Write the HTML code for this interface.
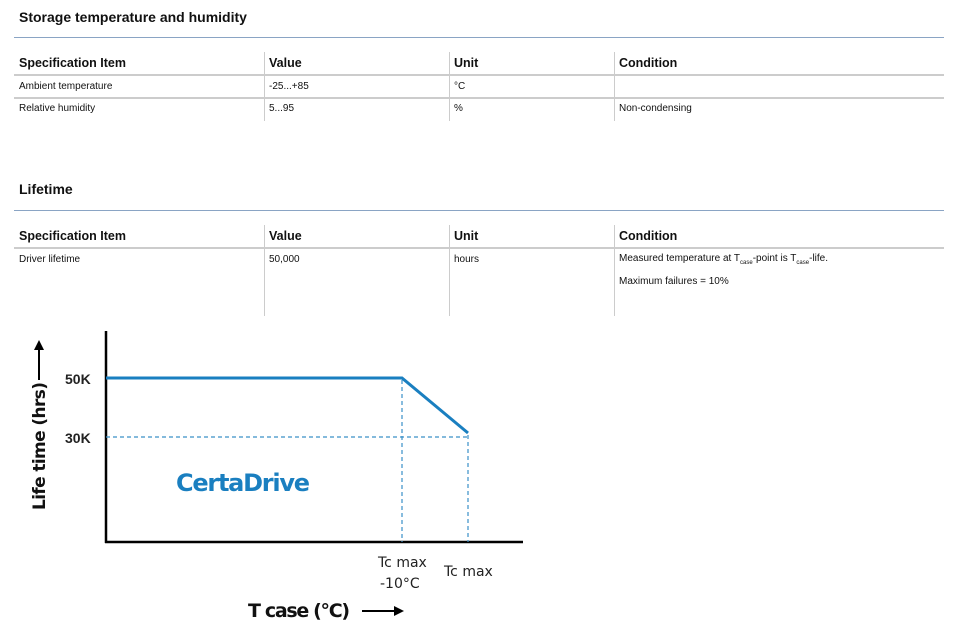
<!DOCTYPE html>
<html><head><meta charset="utf-8"><style>
body{margin:0;width:960px;height:641px;background:#fff;font-family:"Liberation Sans",sans-serif;color:#111;position:relative;overflow:hidden}
.a{position:absolute;white-space:nowrap}
.t{font-size:14px;font-weight:bold}
.h{font-size:12.5px;font-weight:bold}
.c{font-size:10px}
.hl{position:absolute;height:1px;background:#ccc}
.vl{position:absolute;width:1px;background:#ccc}
</style></head><body>
<div class="a t" style="left:19px;top:9px">Storage temperature and humidity</div>
<div class="hl" style="left:14px;top:37px;width:930px;background:#8aa4c4"></div>
<div class="a h" style="left:19px;top:56px">Specification Item</div>
<div class="a h" style="left:269px;top:56px">Value</div>
<div class="a h" style="left:454px;top:56px">Unit</div>
<div class="a h" style="left:619px;top:56px">Condition</div>
<div class="hl" style="left:14px;top:74px;width:930px;height:2px"></div>
<div class="hl" style="left:14px;top:97px;width:930px;height:2px"></div>
<div class="vl" style="left:264px;top:52px;height:69px"></div>
<div class="vl" style="left:449px;top:52px;height:69px"></div>
<div class="vl" style="left:614px;top:52px;height:69px"></div>
<div class="a c" style="left:19px;top:81px">Ambient temperature</div>
<div class="a c" style="left:269px;top:81px">-25...+85</div>
<div class="a c" style="left:454px;top:81px">°C</div>
<div class="a c" style="left:19px;top:103px">Relative humidity</div>
<div class="a c" style="left:269px;top:103px">5...95</div>
<div class="a c" style="left:454px;top:103px">%</div>
<div class="a c" style="left:619px;top:103px">Non-condensing</div>

<div class="a t" style="left:19px;top:181px">Lifetime</div>
<div class="hl" style="left:14px;top:210px;width:930px;background:#8aa4c4"></div>
<div class="a h" style="left:19px;top:229px">Specification Item</div>
<div class="a h" style="left:269px;top:229px">Value</div>
<div class="a h" style="left:454px;top:229px">Unit</div>
<div class="a h" style="left:619px;top:229px">Condition</div>
<div class="hl" style="left:14px;top:247px;width:930px;height:2px"></div>
<div class="vl" style="left:264px;top:225px;height:91px"></div>
<div class="vl" style="left:449px;top:225px;height:91px"></div>
<div class="vl" style="left:614px;top:225px;height:91px"></div>
<div class="a c" style="left:19px;top:254px">Driver lifetime</div>
<div class="a c" style="left:269px;top:254px">50,000</div>
<div class="a c" style="left:454px;top:254px">hours</div>
<div class="a c" style="left:619px;top:253px">Measured temperature at T<sub style="font-size:6px">case</sub>-point is T<sub style="font-size:6px">case</sub>-life.</div>
<div class="a c" style="left:619px;top:276px">Maximum failures = 10%</div>

<svg class="a" style="left:0;top:0" width="960" height="641">
<line x1="106" y1="331" x2="106" y2="543" stroke="#000" stroke-width="2.5"/>
<line x1="105" y1="542" x2="523" y2="542" stroke="#000" stroke-width="2.5"/>
<polyline points="106,378 402,378 468,433" fill="none" stroke="#1a7fc0" stroke-width="3"/>
<g stroke="#3a90c8" stroke-width="1.2" stroke-dasharray="4,3" fill="none">
<line x1="106" y1="437" x2="468" y2="437"/>
<line x1="402" y1="380" x2="402" y2="542"/>
<line x1="468" y1="435" x2="468" y2="542"/>
</g>
<text x="65" y="384" font-size="14" font-weight="bold" font-family="Liberation Sans" fill="#222">50K</text>
<text x="65" y="443" font-size="14" font-weight="bold" font-family="Liberation Sans" fill="#222">30K</text>
<text x="176" y="491" font-size="24" font-weight="bold" font-family="DejaVu Sans" fill="#1a7fc0" textLength="134">CertaDrive</text>
<text x="378" y="567" font-size="14" font-family="DejaVu Sans" fill="#222">Tc max</text>
<text x="380" y="588" font-size="14" font-family="DejaVu Sans" fill="#222">-10°C</text>
<text x="444" y="576" font-size="14" font-family="DejaVu Sans" fill="#222">Tc max</text>
<text x="248" y="617" font-size="19" font-weight="bold" font-family="DejaVu Sans" fill="#111" textLength="102">T case (°C)</text>
<line x1="362" y1="611" x2="396" y2="611" stroke="#000" stroke-width="2"/>
<polygon points="404,611 394,606 394,616" fill="#000"/>
<text transform="translate(45,510) rotate(-90)" font-size="17" font-weight="bold" font-family="DejaVu Sans" fill="#111" textLength="128">Life time (hrs)</text>
<line x1="39" y1="380" x2="39" y2="349" stroke="#000" stroke-width="2"/>
<polygon points="39,340 34,350 44,350" fill="#000"/>
</svg>
</body></html>
